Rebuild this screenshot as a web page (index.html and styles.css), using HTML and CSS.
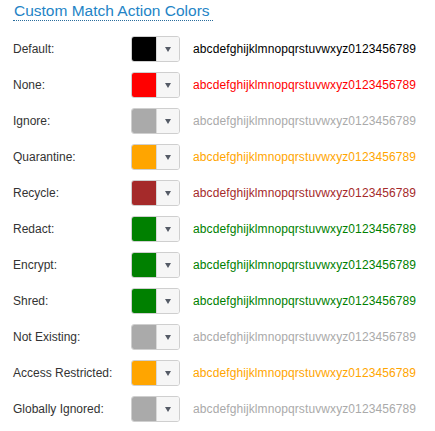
FILE: index.html
```html
<!DOCTYPE html>
<html>
<head>
<meta charset="utf-8">
<link rel="stylesheet" href="styles.css">
</head>
<body>
<div class="panel">
  <h2 class="title">Custom Match Action Colors</h2>
  <div class="rows">
    <div class="row"><span class="label">Default:</span><span class="picker"><span class="swatch c-black"></span><span class="drop"><span class="caret"></span></span></span><span class="sample t-black">abcdefghijklmnopqrstuvwxyz0123456789</span></div>
    <div class="row"><span class="label">None:</span><span class="picker"><span class="swatch c-red"></span><span class="drop"><span class="caret"></span></span></span><span class="sample t-red">abcdefghijklmnopqrstuvwxyz0123456789</span></div>
    <div class="row"><span class="label">Ignore:</span><span class="picker"><span class="swatch c-gray"></span><span class="drop"><span class="caret"></span></span></span><span class="sample t-gray">abcdefghijklmnopqrstuvwxyz0123456789</span></div>
    <div class="row"><span class="label">Quarantine:</span><span class="picker"><span class="swatch c-orange"></span><span class="drop"><span class="caret"></span></span></span><span class="sample t-orange">abcdefghijklmnopqrstuvwxyz0123456789</span></div>
    <div class="row"><span class="label">Recycle:</span><span class="picker"><span class="swatch c-brown"></span><span class="drop"><span class="caret"></span></span></span><span class="sample t-brown">abcdefghijklmnopqrstuvwxyz0123456789</span></div>
    <div class="row"><span class="label">Redact:</span><span class="picker"><span class="swatch c-green"></span><span class="drop"><span class="caret"></span></span></span><span class="sample t-green">abcdefghijklmnopqrstuvwxyz0123456789</span></div>
    <div class="row"><span class="label">Encrypt:</span><span class="picker"><span class="swatch c-green"></span><span class="drop"><span class="caret"></span></span></span><span class="sample t-green">abcdefghijklmnopqrstuvwxyz0123456789</span></div>
    <div class="row"><span class="label">Shred:</span><span class="picker"><span class="swatch c-green"></span><span class="drop"><span class="caret"></span></span></span><span class="sample t-green">abcdefghijklmnopqrstuvwxyz0123456789</span></div>
    <div class="row"><span class="label">Not Existing:</span><span class="picker"><span class="swatch c-gray"></span><span class="drop"><span class="caret"></span></span></span><span class="sample t-gray">abcdefghijklmnopqrstuvwxyz0123456789</span></div>
    <div class="row"><span class="label">Access Restricted:</span><span class="picker"><span class="swatch c-orange"></span><span class="drop"><span class="caret"></span></span></span><span class="sample t-orange">abcdefghijklmnopqrstuvwxyz0123456789</span></div>
    <div class="row"><span class="label">Globally Ignored:</span><span class="picker"><span class="swatch c-gray"></span><span class="drop"><span class="caret"></span></span></span><span class="sample t-gray">abcdefghijklmnopqrstuvwxyz0123456789</span></div>
  </div>
</div>
</body>
</html>
```
FILE: styles.css
```css
html, body { margin: 0; padding: 0; background: #fff; }
body { font-family: "Liberation Sans", Arial, sans-serif; color: #333; }
.panel { padding: 0 0 0 13px; }
.title {
  margin: 0;
  width: 199px;
  white-space: nowrap;
  font-size: 15.5px;
  font-weight: normal;
  color: #2384c6;
  line-height: 19px;
  padding-top: 1px;
  padding-left: 1px;
  border-bottom: 1px dotted #2a6d9c;
}
.rows { display: flex; flex-direction: column; padding-top: 10px; }
.row { display: flex; align-items: center; height: 36px; }
.label { width: 118px; font-size: 12px; color: #333; }
.picker {
  display: flex;
  width: 47px;
  height: 24px;
  border: 1px solid #cfcfcf;
  border-radius: 3px;
  overflow: hidden;
  margin-right: 13px;
}
.swatch { width: 24px; height: 100%; }
.drop {
  flex: 1;
  background: #f6f6f6;
  border-left: 1px solid #d8d8d8;
  display: flex;
  align-items: center;
  justify-content: center;
}
.caret {
  width: 0; height: 0;
  border-left: 3.5px solid transparent;
  border-right: 3.5px solid transparent;
  border-top: 5px solid #555b66;
  margin-top: 1px;
}
.sample { font-size: 12px; letter-spacing: 0.1px; }
.c-black { background: #000; }
.c-red { background: #f00; }
.c-gray { background: #aaa; }
.c-orange { background: #ffa500; }
.c-brown { background: #a52a2a; }
.c-green { background: #008000; }
.t-black { color: #000; }
.t-red { color: #f00; }
.t-gray { color: #aaa; }
.t-orange { color: #ffa500; }
.t-brown { color: #a52a2a; }
.t-green { color: #008000; }
```
